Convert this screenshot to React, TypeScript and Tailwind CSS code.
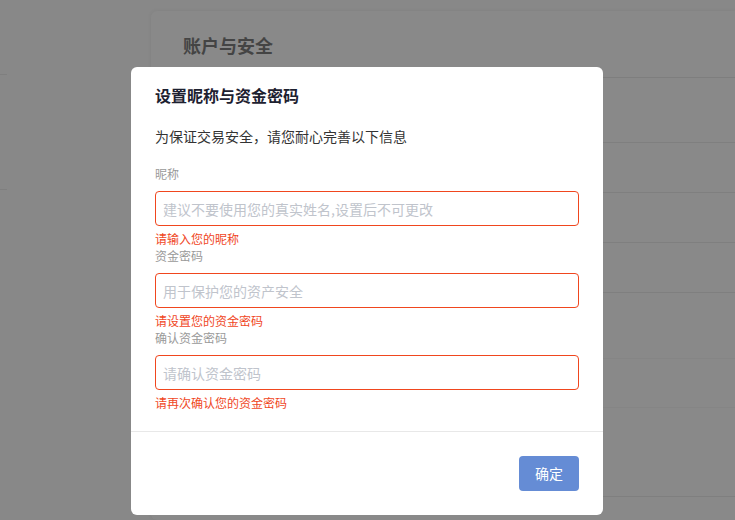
import { useState } from "react";

const FONT = '"Noto Sans CJK SC", "Noto Sans", "Liberation Sans", sans-serif';

type Field = {
  key: string;
  label: string;
  placeholder: string;
  error: string;
  type: string;
};

const fields: Field[] = [
  {
    key: "nickname",
    label: "昵称",
    placeholder: "建议不要使用您的真实姓名,设置后不可更改",
    error: "请输入您的昵称",
    type: "text",
  },
  {
    key: "password",
    label: "资金密码",
    placeholder: "用于保护您的资产安全",
    error: "请设置您的资金密码",
    type: "password",
  },
  {
    key: "confirm",
    label: "确认资金密码",
    placeholder: "请确认资金密码",
    error: "请再次确认您的资金密码",
    type: "password",
  },
];

// the dimmed page that sits behind the dialog
function BackgroundPage() {
  const rows = [65, 50, 50, 50, 66, 49, 89];
  return (
    <div className="flex h-full">
      <div className="w-[7px] shrink-0">
        <div className="h-[75px] border-b border-[#7f7f7f]" />
        <div className="h-[115px] border-b border-[#7f7f7f]" />
      </div>
      <div className="ml-[144px] mt-[11px] flex-1 rounded-l-[6px] bg-[#898989] shadow-[0_0_4px_rgba(0,0,0,0.06)]">
        <div className="h-[67px] border-b border-[#7e7e7e] pl-[32px] pt-[21px]">
          <h2 className="text-[18px] font-bold leading-[26px] text-[#444444]">账户与安全</h2>
        </div>
        {rows.map((h, i) => (
          <div
            key={i}
            style={{ height: h }}
            className={`border-b ${i === 4 || i === 5 ? "border-[#858585]" : "border-[#7f7f7f]"}`}
          />
        ))}
      </div>
    </div>
  );
}

export default function App() {
  const [values, setValues] = useState<Record<string, string>>({});

  return (
    <div
      className="relative h-[520px] w-[735px] overflow-hidden bg-[#888888]"
      style={{ fontFamily: FONT }}
    >
      <BackgroundPage />

      <div className="absolute left-[131px] top-[67px] w-[472px] rounded-[6px] bg-white">
        <div className="px-6 pb-[20px] pt-[16px]">
          <h3 className="text-[16px] font-bold leading-[24px] text-[#1d2130]">设置昵称与资金密码</h3>
          <p className="mt-[18px] text-[14px] leading-[22px] text-[#333333]">
            为保证交易安全，请您耐心完善以下信息
          </p>

          <div className="mt-[18px]">
            {fields.map((f) => (
              <div key={f.key}>
                <label className="block text-[12px] leading-[18px] text-[#999999]">{f.label}</label>
                <input
                  type={f.type}
                  value={values[f.key] ?? ""}
                  onChange={(e) => setValues({ ...values, [f.key]: e.target.value })}
                  placeholder={f.placeholder}
                  className="mt-[8px] block h-[35px] w-full rounded-[4px] border border-[#f0461e] px-[7px] text-[14px] text-[#333333] outline-none placeholder:text-[#c0c4cc]"
                />
                <p className="mt-[4px] text-[12px] leading-[17px] text-[#f0461e]">{f.error}</p>
              </div>
            ))}
          </div>
        </div>

        <div className="flex justify-end border-t border-[#e8e8e8] px-6 py-6">
          <button
            type="button"
            className="h-[35px] w-[60px] rounded-[4px] bg-[#658cd5] text-[14px] text-white"
          >
            确定
          </button>
        </div>
      </div>
    </div>
  );
}
